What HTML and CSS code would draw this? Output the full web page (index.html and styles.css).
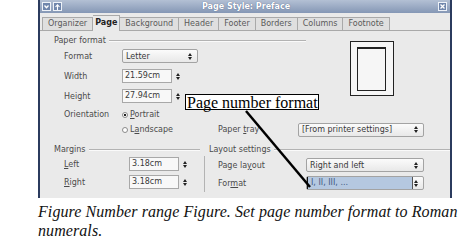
FILE: index.html
```html
<!DOCTYPE html>
<html lang="en">
<head>
    <meta charset="UTF-8">
    <title>Page Style: Preface</title>
    <link rel="stylesheet" href="styles.css">
</head>
<body>
    <div class="figure">
        <div class="window">
            <div class="titlebar">
                <span class="tb-btn">
                    <svg width="5" height="5" viewBox="0 0 5 5"><path d="M0.5 1.5 L2.5 3.8 L4.5 1.5" fill="none" stroke="#fff" stroke-width="1.3"/></svg>
                </span>
                <span class="tb-btn">
                    <svg width="5" height="6" viewBox="0 0 5 6"><path d="M2.5 6 V1 M0.5 3 L2.5 0.8 L4.5 3" fill="none" stroke="#fff" stroke-width="1.1"/></svg>
                </span>
                <span class="title">Page Style: Preface</span>
                <span class="tb-btn">
                    <svg width="5" height="5" viewBox="0 0 5 5"><path d="M0.5 0.5 L4.5 4.5 M4.5 0.5 L0.5 4.5" fill="none" stroke="#fff" stroke-width="1.3"/></svg>
                </span>
            </div>

            <div class="tabs">
                <span class="tab">Organizer</span>
                <span class="tab active">Page</span>
                <span class="tab">Background</span>
                <span class="tab">Header</span>
                <span class="tab">Footer</span>
                <span class="tab">Borders</span>
                <span class="tab">Columns</span>
                <span class="tab">Footnote</span>
            </div>

            <div class="panel">
                <div class="paper">
                    <div class="group-head paper-head">Paper format</div>
                    <div class="preview"><div class="sheet"></div></div>

                    <span class="label">Format</span>
                    <div class="select letter"><span>Letter</span><span class="spin"></span></div>

                    <span class="label">Width</span>
                    <div class="field"><span class="input">21.59cm</span><span class="spin"></span></div>

                    <span class="label">Height</span>
                    <div class="field"><span class="input">27.94cm</span><span class="spin"></span></div>

                    <span class="label">Orientation</span>
                    <span class="radio"><span class="dot on"></span><span><u>P</u>ortrait</span></span>

                    <span class="radio"><span class="dot"></span><span>L<u>a</u>ndscape</span></span>
                    <span class="label tray-label">Paper <u>t</u>ray</span>
                    <div class="select tray"><span>[From printer settings]</span><span class="spin"></span></div>
                </div>

                <div class="lower">
                    <div class="margins">
                        <div class="group-head">Margins</div>
                        <div class="row">
                            <span class="label wide"><u>L</u>eft</span>
                            <div class="field"><span class="input">3.18cm</span><span class="spin"></span></div>
                        </div>
                        <div class="row">
                            <span class="label wide"><u>R</u>ight</span>
                            <div class="field"><span class="input">3.18cm</span><span class="spin"></span></div>
                        </div>
                    </div>
                    <div class="layout">
                        <div class="group-head">Layout settings</div>
                        <div class="layout-rows">
                            <div class="row">
                                <span class="label layout-label">Page la<u>y</u>out</span>
                                <div class="select layout-select"><span>Right and left</span><span class="spin"></span></div>
                            </div>
                            <div class="row">
                                <span class="label layout-label">For<u>m</u>at</span>
                                <div class="select layout-select numbering"><span class="picked">I, II, III, ...</span><span class="spin"></span></div>
                            </div>
                        </div>
                    </div>
                </div>
            </div>
        </div>

        <p class="caption">Figure Number range Figure. Set page number format to Roman numerals.</p>

        <div class="callout">Page number format</div>
        <svg class="pointer" width="459" height="243" viewBox="0 0 459 243">
            <line x1="246" y1="111" x2="310" y2="187" stroke="#000" stroke-width="2.5"/>
        </svg>
    </div>
</body>
</html>
```

FILE: styles.css
```css
*{
    margin: 0;
    padding: 0;
    box-sizing: border-box;
}
body{
    background: #fff;
    font-family: "DejaVu Sans", sans-serif;
}
u{
    text-decoration: underline;
    text-underline-offset: 1px;
}
.figure{
    position: relative;
    width: 459px;
    height: 243px;
    padding-left: 38px;
}
.window{
    width: 414px;
    height: 198px;
    border-left: 2px solid #2b3b5e;
    border-right: 2px solid #2b3b5e;
    background: #eaeaea;
    overflow: hidden;
    font-size: 8px;
    color: #4a4a4a;
}

/* title bar */
.titlebar{
    height: 13px;
    display: flex;
    align-items: center;
    gap: 2px;
    padding: 0 3px 0 2px;
    background: linear-gradient(#b3c0d4, #8597b5);
}
.tb-btn{
    width: 9px;
    height: 9px;
    border: 1px solid #eef2f8;
    background: #7086ac;
    display: flex;
    align-items: center;
    justify-content: center;
}
.title{
    flex: 1;
    padding-right: 8px;
    text-align: center;
    color: #fff;
    font-weight: bold;
    text-shadow: 0 0 1px #43557a;
}

/* tabs */
.tabs{
    height: 18px;
    display: flex;
    align-items: flex-end;
    padding-left: 2px;
    border-bottom: 1px solid #a9a9a9;
}
.tab{
    height: 14px;
    line-height: 12px;
    padding: 0 5px;
    margin-bottom: -1px;
    background: #dfdfdf;
    border: 1px solid #a9a9a9;
    border-left: none;
    color: #5a5a5a;
}
.tab:first-child{
    border-left: 1px solid #a9a9a9;
}
.tab.active{
    height: 16px;
    padding: 0 2px;
    line-height: 14px;
    background: #eaeaea;
    border-bottom: none;
    font-weight: bold;
    color: #222;
}

/* panel */
.panel{
    padding-top: 4px;
}
.group-head{
    display: flex;
    align-items: center;
    gap: 3px;
    height: 11px;
    color: #4a4a4a;
}
.group-head::after{
    content: "";
    flex: 1;
    border-top: 1px solid #b3b3b3;
    border-bottom: 1px solid #fafafa;
}
.label{
    color: #4a4a4a;
}

.paper{
    display: grid;
    grid-template-columns: 58px 96px 80px 1fr;
    grid-template-rows: 11px 20px 20px 20px 17px 13px;
    align-items: center;
    padding-left: 24px;
}
.paper > .label{
    grid-column: 1;
}
.paper > .field,
.paper > .select,
.paper > .radio{
    grid-column: 2;
}
.paper > .tray-label{
    grid-column: 3;
}
.paper > .tray{
    grid-column: 4;
}
.paper-head{
    grid-column: 1 / 4;
    grid-row: 1;
    width: 252px;
    margin-left: -10px;
}
.preview{
    grid-column: 4;
    grid-row: 1 / 5;
    align-self: start;
    width: 44px;
    height: 55px;
    margin: 6px 0 0 52px;
    padding: 5px 7px 4px 6px;
    border: 1px solid #222;
    background: #f6f6f6;
}
.sheet{
    height: 100%;
    border: 1px solid #222;
    border-top-width: 2px;
}

/* controls */
.select{
    height: 14px;
    display: flex;
    align-items: center;
    justify-content: space-between;
    padding: 0 5px 0 3px;
    border: 1px solid #a3a3a3;
    border-radius: 2px;
    background: linear-gradient(#fbfbfb, #e8e8e8);
    color: #3a3a3a;
}
.letter{
    width: 76px;
}
.tray{
    width: 126px;
}
.field{
    display: flex;
    align-items: center;
    gap: 4px;
}
.input{
    width: 50px;
    height: 14px;
    line-height: 12px;
    padding-left: 2px;
    border: 1px solid #a8a8a8;
    background: #f8f8f8;
    color: #3a3a3a;
}
.spin{
    display: inline-flex;
    flex-direction: column;
    gap: 1px;
}
.spin::before,
.spin::after{
    content: "";
    border-left: 2px solid transparent;
    border-right: 2px solid transparent;
}
.spin::before{
    border-bottom: 3px solid #222;
}
.spin::after{
    border-top: 3px solid #222;
}
.radio{
    display: flex;
    align-items: center;
    gap: 2px;
    color: #4a4a4a;
}
.dot{
    width: 6px;
    height: 6px;
    border-radius: 50%;
    border: 1px solid #8a8a8a;
    background: #fff;
}
.dot.on{
    background: radial-gradient(#222 45%, #fff 55%);
}

/* lower part */
.lower{
    display: flex;
    margin-top: 8px;
}
.margins{
    width: 164px;
    padding: 0 4px 0 14px;
}
.row{
    height: 18px;
    display: flex;
    align-items: center;
}
.margins .row{
    padding-left: 10px;
}
.label.wide{
    width: 65px;
}
.layout{
    flex: 1;
}
.layout .group-head{
    margin-left: 5px;
}
.layout-rows{
    border-left: 1px solid #b3b3b3;
    padding-left: 13px;
    margin-top: 1px;
}
.layout-label{
    width: 88px;
}
.layout-select{
    width: 118px;
}
.numbering{
    padding: 0 5px 0 0;
}
.picked{
    width: 106px;
    height: 12px;
    line-height: 12px;
    padding-left: 3px;
    background: #b5c8e0;
    border-left: 1px solid #111;
    border-right: 1px solid #555;
    color: #3f5a82;
}

/* caption and callout */
.caption{
    margin-top: 4px;
    width: 421px;
    font: italic 16px/19px "Liberation Serif", serif;
    letter-spacing: 0.08px;
    color: #111;
}
.callout{
    position: absolute;
    left: 185px;
    top: 94px;
    width: 134px;
    height: 16px;
    padding-left: 1px;
    border: 1px solid #000;
    background: #fff;
    font: 16px/16px "Liberation Serif", serif;
    white-space: nowrap;
    color: #000;
}
.pointer{
    position: absolute;
    left: 0;
    top: 0;
    pointer-events: none;
}
```
